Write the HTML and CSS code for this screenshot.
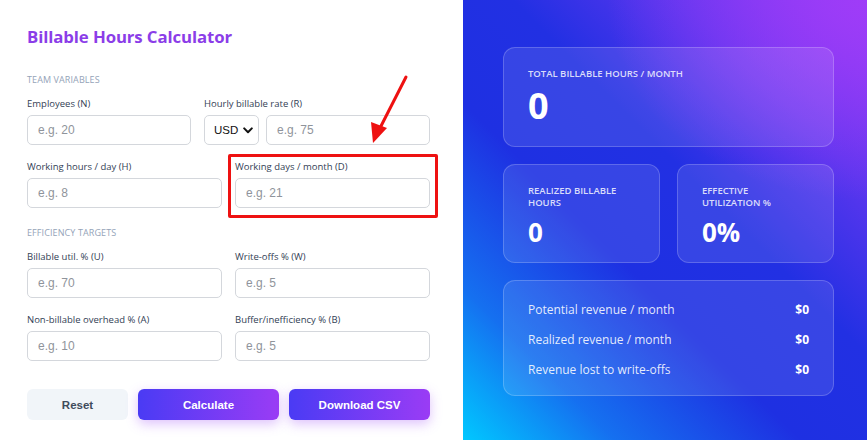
FILE: index.html
```html
<!DOCTYPE html>
<html lang="en">
<head>
<meta charset="utf-8">
<title>Billable Hours Calculator</title>
<link rel="stylesheet" href="styles.css">
</head>
<body>
<div class="app">
  <section class="form-panel">
    <h1 class="title">Billable Hours Calculator</h1>

    <div class="section-label">Team variables</div>
    <div class="grid grid-first">
      <div class="field">
        <label class="label">Employees (N)</label>
        <input class="input" type="text" placeholder="e.g. 20">
      </div>
      <div class="field">
        <label class="label">Hourly billable rate (R)</label>
        <div class="rate-row">
          <div class="select-wrap">
            <select class="select"><option>USD</option></select>
            <svg class="chev" width="10" height="7" viewBox="0 0 10 7"><path d="M1.2 1.4 L5 5.2 L8.8 1.4" fill="none" stroke="#111" stroke-width="2" stroke-linecap="round" stroke-linejoin="round"/></svg>
          </div>
          <input class="input" type="text" placeholder="e.g. 75">
        </div>
      </div>
    </div>
    <div class="grid">
      <div class="field">
        <label class="label">Working hours / day (H)</label>
        <input class="input" type="text" placeholder="e.g. 8">
      </div>
      <div class="field highlighted">
        <label class="label">Working days / month (D)</label>
        <input class="input" type="text" placeholder="e.g. 21">
        <div class="highlight-box"></div>
      </div>
    </div>

    <div class="section-label section-label-2">Efficiency targets</div>
    <div class="grid grid-first-2">
      <div class="field">
        <label class="label">Billable util. % (U)</label>
        <input class="input" type="text" placeholder="e.g. 70">
      </div>
      <div class="field">
        <label class="label">Write-offs % (W)</label>
        <input class="input" type="text" placeholder="e.g. 5">
      </div>
    </div>
    <div class="grid">
      <div class="field">
        <label class="label">Non-billable overhead % (A)</label>
        <input class="input" type="text" placeholder="e.g. 10">
      </div>
      <div class="field">
        <label class="label">Buffer/inefficiency % (B)</label>
        <input class="input" type="text" placeholder="e.g. 5">
      </div>
    </div>

    <div class="buttons">
      <button class="btn btn-reset">Reset</button>
      <button class="btn btn-primary">Calculate</button>
      <button class="btn btn-primary">Download CSV</button>
    </div>

    <svg class="arrow" width="50" height="80" viewBox="0 0 50 80">
      <line x1="44" y1="7" x2="17" y2="60" stroke="#ee1111" stroke-width="3" stroke-linecap="round"/>
      <polygon points="11,73 9,52 25,58" fill="#ee1111"/>
    </svg>
  </section>

  <section class="result-panel">
    <div class="card card-main">
      <div class="card-label">Total billable hours / month</div>
      <div class="card-value big">0</div>
    </div>
    <div class="card-row">
      <div class="card card-small">
        <div class="card-label">Realized billable<br>hours</div>
        <div class="card-value">0</div>
      </div>
      <div class="card card-small">
        <div class="card-label">Effective<br>utilization %</div>
        <div class="card-value">0%</div>
      </div>
    </div>
    <div class="card card-list">
      <div class="list-row"><span>Potential revenue / month</span><strong>$0</strong></div>
      <div class="list-row"><span>Realized revenue / month</span><strong>$0</strong></div>
      <div class="list-row"><span>Revenue lost to write-offs</span><strong>$0</strong></div>
    </div>
  </section>
</div>
</body>
</html>
```

FILE: styles.css
```css
* { box-sizing: border-box; }
html, body { margin: 0; padding: 0; }
body {
  width: 867px;
  height: 440px;
  overflow: hidden;
  background: #ffffff;
  font-family: "Open Sans", "Noto Sans", sans-serif;
}
.app {
  display: flex;
  height: 440px;
}
.form-panel {
  position: relative;
  width: 463px;
  flex: none;
  padding: 25px 33px 0 27px;
  background: #ffffff;
}
.title {
  margin: 0;
  font-size: 16.8px;
  line-height: 24px;
  font-weight: 700;
  color: #8b3de8;
  letter-spacing: -0.1px;
}
.section-label {
  margin-top: 25px;
  font-size: 9px;
  line-height: 12px;
  text-transform: uppercase;
  color: #94a3b8;
  letter-spacing: 0.1px;
}
.section-label-2 { margin-top: 19px; }
.grid {
  display: grid;
  grid-template-columns: 1fr 1fr;
  column-gap: 13px;
  margin-top: 16px;
}
.grid-first {
  grid-template-columns: 164px 1fr;
  margin-top: 12px;
}
.grid-first-2 { margin-top: 12px; }
.field {
  position: relative;
  display: flex;
  flex-direction: column;
  gap: 5px;
}
.label {
  font-size: 9.5px;
  line-height: 12px;
  color: #334155;
}
.input {
  width: 100%;
  height: 30px;
  border: 1px solid #d4d7dc;
  border-radius: 5px;
  padding: 0 10px;
  font-family: "Liberation Sans", Arial, sans-serif;
  font-size: 12px;
  color: #111;
  background: #fff;
  outline: none;
}
.input::placeholder { color: #8f949b; }
.rate-row {
  display: flex;
  gap: 7px;
}
.select-wrap {
  position: relative;
  width: 55px;
  flex: none;
}
.select {
  appearance: none;
  -webkit-appearance: none;
  width: 55px;
  height: 30px;
  border: 1px solid #d4d7dc;
  border-radius: 5px;
  padding: 0 0 0 9px;
  font-family: "Liberation Sans", Arial, sans-serif;
  font-size: 11.5px;
  color: #111;
  background: #fff;
}
.chev {
  position: absolute;
  right: 6px;
  top: 12px;
}
.highlight-box {
  position: absolute;
  left: -7px;
  right: -8px;
  top: -7px;
  bottom: -10px;
  border: 3px solid #ee1111;
  border-radius: 2px;
  pointer-events: none;
}
.buttons {
  display: grid;
  grid-template-columns: 101px 141px 1fr;
  column-gap: 10px;
  margin-top: 28px;
}
.btn {
  height: 31px;
  border: none;
  border-radius: 6px;
  font-family: "Liberation Sans", Arial, sans-serif;
  font-size: 11.5px;
  font-weight: 700;
}
.btn-reset {
  background: #f1f5f9;
  color: #3f4b5c;
}
.btn-primary {
  background: linear-gradient(90deg, #4a3bf4 0%, #9a3cf5 100%);
  color: #fff;
  box-shadow: 0 4px 12px rgba(160, 80, 245, 0.35);
}
.arrow {
  position: absolute;
  left: 362px;
  top: 70px;
}

.result-panel {
  flex: 1;
  padding: 47px 33px 0 40px;
  display: flex;
  flex-direction: column;
  gap: 17px;
  background:
    radial-gradient(ellipse 260px 200px at 100% 0%, rgba(160, 60, 248, 0.95) 0%, rgba(160, 60, 248, 0) 100%),
    linear-gradient(45deg, #00c8ff 0%, #1570f0 18%, #1e30e2 40%, #2230e3 58%, #5a36ee 78%, #8e3bf5 100%);
  color: #fff;
}
.card {
  background: rgba(255, 255, 255, 0.1);
  border: 1px solid rgba(255, 255, 255, 0.2);
  border-radius: 12px;
}
.card-main {
  height: 100px;
  padding: 20px 24px;
}
.card-label {
  font-size: 9.5px;
  line-height: 12px;
  font-weight: 600;
  text-transform: uppercase;
  color: rgba(255, 255, 255, 0.82);
}
.card-value {
  font-weight: 700;
  font-size: 26px;
  line-height: 30px;
  margin-top: 8px;
}
.card-value.big {
  font-size: 36px;
  line-height: 40px;
  margin-top: 6px;
}
.card-row {
  display: grid;
  grid-template-columns: 1fr 1fr;
  column-gap: 17px;
}
.card-small {
  height: 99px;
  padding: 20px 24px;
}
.card-list {
  height: 116px;
  padding: 13px 24px 0 24px;
  display: flex;
  flex-direction: column;
}
.list-row {
  display: flex;
  justify-content: space-between;
  align-items: center;
  height: 30px;
  font-size: 12px;
  color: rgba(255, 255, 255, 0.88);
}
.list-row strong {
  color: #fff;
  font-weight: 700;
}
```
